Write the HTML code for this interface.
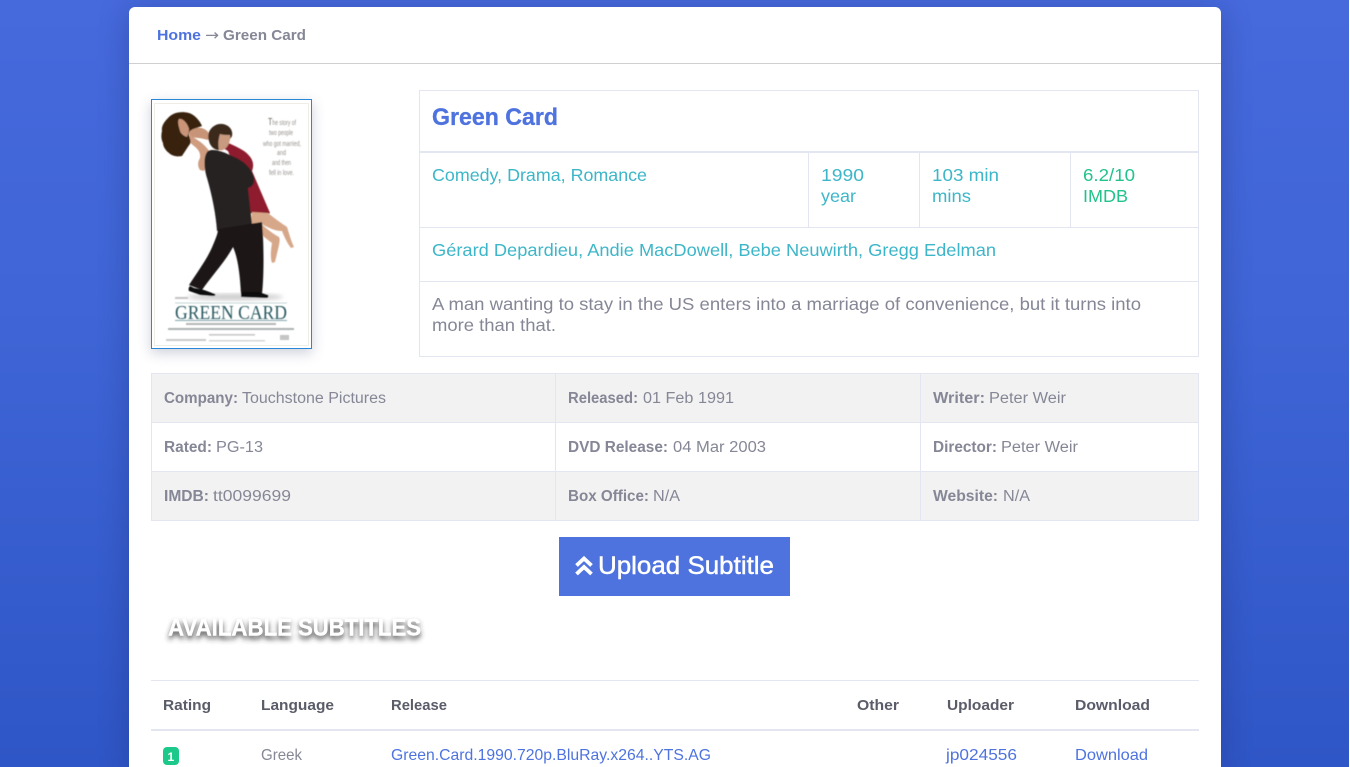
<!DOCTYPE html>
<html lang="en"><head><meta charset="utf-8"><title>Green Card</title>
<style>
html,body{margin:0;padding:0;width:1350px;height:767px;overflow:hidden;background:#fff}
#page{position:relative;width:1350px;height:767px;overflow:hidden}
#bg{position:absolute;left:0;top:0;width:1349px;height:767px;background:linear-gradient(180deg,#4669dc 0%,#3f65d6 40%,#2f56c6 100%);overflow:hidden}
#card{position:absolute;left:129px;top:7px;width:1092px;height:760px;background:#fff;border-radius:6px 6px 0 0;box-shadow:0 4px 30px rgba(20,30,80,.28)}
.b{position:absolute;box-sizing:border-box}
svg{position:absolute;left:0;top:0;display:block;overflow:hidden}
text{font-family:"Liberation Sans",sans-serif}
.g{fill:#858796}.t{fill:#3cb6c8}.s{fill:#22c38a}.l{fill:#4e73df}.h{fill:#5a5c69;font-weight:700;font-size:15px}
.d{font-size:15.5px;fill:#858796}.e{font-size:15.5px;fill:#858796;font-weight:700}
</style></head><body>
<div id="page">
<div id="bg"><div id="card"></div></div>
<div class="b" style="left:129px;top:63px;width:1092px;height:1px;background:#cfcfcf"></div>

<!-- info table -->
<div class="b" style="left:419px;top:90px;width:780px;height:267px;border:1px solid #e3e6f0"></div>
<div class="b" style="left:420px;top:151px;width:778px;height:2px;background:#e3e6f0"></div>
<div class="b" style="left:420px;top:227px;width:778px;height:1px;background:#e3e6f0"></div>
<div class="b" style="left:420px;top:281px;width:778px;height:1px;background:#e3e6f0"></div>
<div class="b" style="left:808px;top:153px;width:1px;height:74px;background:#e3e6f0"></div>
<div class="b" style="left:919px;top:153px;width:1px;height:74px;background:#e3e6f0"></div>
<div class="b" style="left:1070px;top:153px;width:1px;height:74px;background:#e3e6f0"></div>

<!-- details table -->
<div class="b" style="left:151px;top:373px;width:1048px;height:148px;border:1px solid #e3e6f0"></div>
<div class="b" style="left:152px;top:374px;width:1046px;height:48px;background:#f2f2f2"></div>
<div class="b" style="left:152px;top:422px;width:1046px;height:1px;background:#e3e6f0"></div>
<div class="b" style="left:152px;top:471px;width:1046px;height:1px;background:#e3e6f0"></div>
<div class="b" style="left:152px;top:472px;width:1046px;height:48px;background:#f2f2f2"></div>
<div class="b" style="left:555px;top:374px;width:1px;height:146px;background:#e3e6f0"></div>
<div class="b" style="left:920px;top:374px;width:1px;height:146px;background:#e3e6f0"></div>

<!-- button -->
<div class="b" style="left:559px;top:537px;width:231px;height:59px;background:#4e73df"></div>

<!-- subtitles table lines -->
<div class="b" style="left:151px;top:680px;width:1048px;height:1px;background:#e3e6f0"></div>
<div class="b" style="left:151px;top:729px;width:1048px;height:2px;background:#e3e6f0"></div>
<div class="b" style="left:163px;top:747px;width:16px;height:18px;background:#1cc88a;border-radius:4px"></div>

<!-- poster frame -->
<div class="b" style="left:151px;top:99px;width:161px;height:250px;background:#fff;border:1px solid #2a86d6;box-shadow:0 4px 12px rgba(60,70,110,.25)"></div>
<div class="b" style="left:154px;top:103px;width:155px;height:243px;border:1px solid #eeeee6"></div>

<svg width="1350" height="767" viewBox="0 0 1350 767">
<defs>
<filter id="bl" x="-5%" y="-5%" width="110%" height="110%"><feGaussianBlur stdDeviation=".55"/></filter>
<filter id="bs"><feGaussianBlur stdDeviation="2"/></filter>
<filter id="ts" x="-10%" y="-80%" width="120%" height="260%"><feGaussianBlur stdDeviation="2.6"/></filter>
</defs>

<!-- poster art -->
<g filter="url(#bl)">
<ellipse cx="235" cy="297" rx="48" ry="3.5" fill="#cfcfcf" filter="url(#bs)"/>
<!-- red dress -->
<path d="M193 130c8 1 14 1 19 7 8 3 21 7 32 14 8 6 11 12 8 20l18 42-6 3-14-3-6-2-4-30-12-30-22-13z" fill="#8f1d2e"/>
<!-- woman's legs -->
<path d="M252 212l16 1c6 5 13 10 19 14 2 6 4 14 7 20l-3 1c-4-5-7-12-9-17-8 0-15-4-22-8 6 5 13 11 19 14 2 3-1 12-4 25l-3 1c-2-6-1-14 0-20-8-6-16-12-21-22z" fill="#d7a789"/>
<!-- woman's torso/arm -->
<path d="M188 130c6-3 15-4 20 2 3 3 3 5 2 8-4 0-8-2-12-2l-8-1z" fill="#c89477"/>
<path d="M190 135l9 6c3 2 10 8 11 12 1 6-2 13-6 18l-4-1c-2-3-3-7 0-12 1-5-2-9-6-12l-7-6z" fill="#cf9c80"/>
<!-- hair -->
<path d="M162 131c-1-5 3-10 6-13 5-6 14-7 21-5 6 2 11 8 13 13-5 2-11 3-13 6-1 5 3 8 1 12-3 4-6 9-8 12-5 1-10 0-13-3-4-3-6-7-6-10-2-4-2-8-1-12z" fill="#39200f"/>
<path d="M179 119c4-1 9 5 10 10 0 3-1 6-2 8-3-1-6-3-7-6-1-4-3-9-1-12z" fill="#c99478"/>
<!-- jacket -->
<path d="M208 151c6-3 16 1 24 5 11 4 20 12 22 22 1 6-2 9-6 10l4 36-35 7c-1-16-5-36-10-53-3-10-4-22 1-27z" fill="#282420"/>
<!-- pants -->
<path d="M218 229l44-7c2 23 2 53 0 72h-21c-1-19-3-36-8-47-8 15-23 31-31 43l-13-5c7-11 19-27 24-40 3-7 5-12 5-16z" fill="#1b1817"/>
<!-- shoes -->
<path d="M190 286l4 2 10 2 11 4c1 1 0 2-2 2l-13-1-11-4c-1-2 0-4 1-5z" fill="#0e0d0d"/>
<path d="M241 292l18 0 9 3c1 1 0 3-1 3l-26-1z" fill="#0e0d0d"/>
<!-- man's head -->
<path d="M209 132c3-7 11-10 17-7 5 2 7 7 6 11-2 4-4 4-8 4-1 3-3 9-5 10-5 0-9-4-10-9-1-3-1-6 0-9z" fill="#3a2a1f"/>
<path d="M220 134c3 1 7 1 10 1 1 4-1 10-4 13-2 2-5 3-7 2-1-4-1-10 1-16z" fill="#c89a80"/>
<!-- bottom text -->
<path d="M175 303h112" stroke="#8fa9ac" stroke-width=".6"/>
<path d="M175 320.5h112" stroke="#58888c" stroke-width=".7"/>
<rect x="186" y="323" width="90" height="2" fill="#b4b8b8"/>
<rect x="168" y="328" width="126" height="2" fill="#aeb2b3"/>
<rect x="209" y="334" width="46" height="1.6" fill="#c9c9c9"/>
<rect x="166" y="339" width="40" height="2" fill="#c9c9c9"/>
<rect x="209" y="340" width="56" height="1.5" fill="#d5d5d5"/>
<rect x="280" y="335" width="9" height="5" fill="#c5c5c5"/>
<rect x="175" y="297" width="13" height="2" fill="#c4c4c4"/>
<text x="175" y="319" style="font-family:'Liberation Serif',serif" font-size="20" fill="#2a5a60" textLength="112" lengthAdjust="spacingAndGlyphs">GREEN CARD</text>
<g style="font-family:'Liberation Serif',serif" font-size="7" fill="#97928e">
<text x="268" y="125" textLength="28" lengthAdjust="spacingAndGlyphs"><tspan font-size="10" fill="#6f6760">T</tspan>he story of</text>
<text x="269" y="135" textLength="24" lengthAdjust="spacingAndGlyphs">two people</text>
<text x="263" y="146" textLength="38" lengthAdjust="spacingAndGlyphs">who got married,</text>
<text x="277" y="155" textLength="9" lengthAdjust="spacingAndGlyphs">and</text>
<text x="272" y="165" textLength="19" lengthAdjust="spacingAndGlyphs">and then</text>
<text x="269" y="175" textLength="25" lengthAdjust="spacingAndGlyphs">fell in love.</text>
</g>
</g>

<!-- breadcrumb -->
<text x="157" y="40" font-size="15" font-weight="700" class="l" textLength="44" lengthAdjust="spacingAndGlyphs">Home</text>
<text x="205" y="40" font-size="15" class="g" style="font-family:'DejaVu Sans',sans-serif" textLength="14" lengthAdjust="spacingAndGlyphs">→</text>
<text x="223" y="40" font-size="15" font-weight="700" class="g" textLength="83" lengthAdjust="spacingAndGlyphs">Green Card</text>

<!-- info -->
<text x="432" y="125" font-size="24" font-weight="700" class="l" textLength="126" lengthAdjust="spacingAndGlyphs" stroke="#4e73df" stroke-width=".3">Green Card</text>
<text x="432" y="181" font-size="17.6" class="t" textLength="215" lengthAdjust="spacingAndGlyphs">Comedy, Drama, Romance</text>
<text x="821" y="181" font-size="17.6" class="t" textLength="43" lengthAdjust="spacingAndGlyphs">1990</text>
<text x="821" y="202" font-size="17.6" class="t" textLength="35" lengthAdjust="spacingAndGlyphs">year</text>
<text x="932" y="181" font-size="17.6" class="t" textLength="67" lengthAdjust="spacingAndGlyphs">103 min</text>
<text x="932" y="202" font-size="17.6" class="t" textLength="39" lengthAdjust="spacingAndGlyphs">mins</text>
<text x="1083" y="181" font-size="17.6" class="s" textLength="52" lengthAdjust="spacingAndGlyphs">6.2/10</text>
<text x="1083" y="202" font-size="17.6" class="s" textLength="45" lengthAdjust="spacingAndGlyphs">IMDB</text>
<text x="432" y="256" font-size="17.6" class="t" textLength="564" lengthAdjust="spacingAndGlyphs">Gérard Depardieu, Andie MacDowell, Bebe Neuwirth, Gregg Edelman</text>
<text x="432" y="310" font-size="17.6" class="g" textLength="709" lengthAdjust="spacingAndGlyphs">A man wanting to stay in the US enters into a marriage of convenience, but it turns into</text>
<text x="432" y="331" font-size="17.6" class="g" textLength="124" lengthAdjust="spacingAndGlyphs">more than that.</text>

<!-- details -->
<text x="164" y="403" class="e" textLength="74" lengthAdjust="spacingAndGlyphs">Company:</text><text x="242" y="403" class="d" textLength="144" lengthAdjust="spacingAndGlyphs">Touchstone Pictures</text>
<text x="568" y="403" class="e" textLength="70" lengthAdjust="spacingAndGlyphs">Released:</text><text x="643" y="403" class="d" textLength="91" lengthAdjust="spacingAndGlyphs">01 Feb 1991</text>
<text x="933" y="403" class="e" textLength="52" lengthAdjust="spacingAndGlyphs">Writer:</text><text x="989" y="403" class="d" textLength="77" lengthAdjust="spacingAndGlyphs">Peter Weir</text>
<text x="164" y="452" class="e" textLength="48" lengthAdjust="spacingAndGlyphs">Rated:</text><text x="216" y="452" class="d" textLength="47" lengthAdjust="spacingAndGlyphs">PG-13</text>
<text x="568" y="452" class="e" textLength="100" lengthAdjust="spacingAndGlyphs">DVD Release:</text><text x="673" y="452" class="d" textLength="93" lengthAdjust="spacingAndGlyphs">04 Mar 2003</text>
<text x="933" y="452" class="e" textLength="64" lengthAdjust="spacingAndGlyphs">Director:</text><text x="1001" y="452" class="d" textLength="77" lengthAdjust="spacingAndGlyphs">Peter Weir</text>
<text x="164" y="501" class="e" textLength="45" lengthAdjust="spacingAndGlyphs">IMDB:</text><text x="213" y="501" class="d" textLength="78" lengthAdjust="spacingAndGlyphs">tt0099699</text>
<text x="568" y="501" class="e" textLength="81" lengthAdjust="spacingAndGlyphs">Box Office:</text><text x="653" y="501" class="d" textLength="27" lengthAdjust="spacingAndGlyphs">N/A</text>
<text x="933" y="501" class="e" textLength="65" lengthAdjust="spacingAndGlyphs">Website:</text><text x="1003" y="501" class="d" textLength="27" lengthAdjust="spacingAndGlyphs">N/A</text>

<!-- button -->
<path d="M576.5 565.5l7.5-7 7.5 7M576.5 574l7.5-7 7.5 7" fill="none" stroke="#fff" stroke-width="3.8"/>
<text x="598" y="574" font-size="25" fill="#fff" textLength="176" lengthAdjust="spacingAndGlyphs" stroke="#fff" stroke-width=".45">Upload Subtitle</text>

<!-- heading -->
<g font-size="24.5" font-weight="700">
<text x="168" y="639" fill="#333" filter="url(#ts)" textLength="124" lengthAdjust="spacingAndGlyphs">AVAILABLE</text>
<text x="298" y="639" fill="#333" filter="url(#ts)" textLength="123" lengthAdjust="spacingAndGlyphs">SUBTITLES</text>
<text x="168" y="635.5" fill="#fff" stroke="#fff" stroke-width=".4" textLength="124" lengthAdjust="spacingAndGlyphs">AVAILABLE</text>
<text x="298" y="635.5" fill="#fff" stroke="#fff" stroke-width=".4" textLength="123" lengthAdjust="spacingAndGlyphs">SUBTITLES</text>
</g>

<!-- subtitles table -->
<text x="163" y="710" class="h" textLength="48" lengthAdjust="spacingAndGlyphs">Rating</text>
<text x="261" y="710" class="h" textLength="73" lengthAdjust="spacingAndGlyphs">Language</text>
<text x="391" y="710" class="h" textLength="56" lengthAdjust="spacingAndGlyphs">Release</text>
<text x="857" y="710" class="h" textLength="42" lengthAdjust="spacingAndGlyphs">Other</text>
<text x="947" y="710" class="h" textLength="67" lengthAdjust="spacingAndGlyphs">Uploader</text>
<text x="1075" y="710" class="h" textLength="75" lengthAdjust="spacingAndGlyphs">Download</text>

<text x="167.5" y="761" font-size="12" font-weight="700" fill="#fff">1</text>
<text x="261" y="760" font-size="16" class="g" textLength="41" lengthAdjust="spacingAndGlyphs">Greek</text>
<text x="391" y="760" font-size="16" class="l" textLength="320" lengthAdjust="spacingAndGlyphs">Green.Card.1990.720p.BluRay.x264..YTS.AG</text>
<text x="946" y="760" font-size="16" class="l" textLength="71" lengthAdjust="spacingAndGlyphs">jp024556</text>
<text x="1075" y="760" font-size="16" class="l" textLength="73" lengthAdjust="spacingAndGlyphs">Download</text>
</svg>
</div>
</body></html>
